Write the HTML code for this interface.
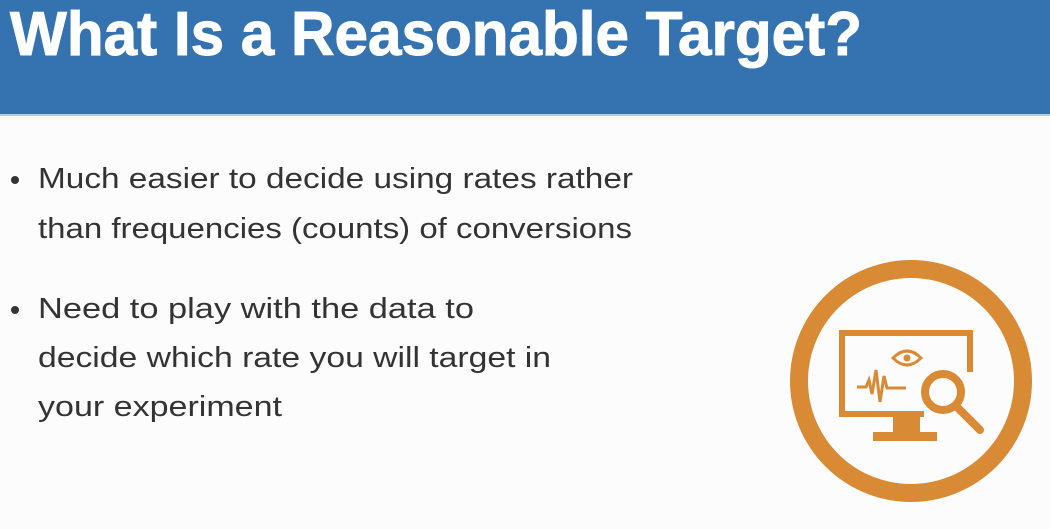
<!DOCTYPE html>
<html><head><meta charset="utf-8"><style>
html,body{margin:0;padding:0;background:#fcfcfc;width:1050px;height:529px;overflow:hidden}
</style></head><body>
<svg width="1050" height="529" viewBox="0 0 1050 529" xmlns="http://www.w3.org/2000/svg">
<rect x="0" y="0" width="1050" height="529" fill="#fcfcfc"/>
<rect x="0" y="0" width="1050" height="114" fill="#3572b0"/>
<rect x="0" y="114" width="1050" height="2" fill="#a9cde6"/>
<text x="10" y="55" font-family="Liberation Sans, sans-serif" font-weight="bold" font-size="62" fill="#ffffff" stroke="#ffffff" stroke-width="1" textLength="852" lengthAdjust="spacingAndGlyphs">What Is a Reasonable Target?</text>
<g font-family="Liberation Sans, sans-serif" font-size="29" fill="#333333">
<circle cx="15" cy="180" r="4" fill="#333"/>
<text x="38" y="188" textLength="595" lengthAdjust="spacingAndGlyphs">Much easier to decide using rates rather</text>
<text x="38" y="238" textLength="594" lengthAdjust="spacingAndGlyphs">than frequencies (counts) of conversions</text>
<circle cx="15" cy="310" r="4" fill="#333"/>
<text x="38" y="318" textLength="436" lengthAdjust="spacingAndGlyphs">Need to play with the data to</text>
<text x="38" y="367" textLength="513" lengthAdjust="spacingAndGlyphs">decide which rate you will target in</text>
<text x="38" y="416" textLength="244" lengthAdjust="spacingAndGlyphs">your experiment</text>
</g>
<g fill="none" stroke="#d98a35">
<circle cx="911" cy="381" r="112" stroke-width="18"/>
<path d="M970 372 V333 H842 V414 H924" stroke-width="6"/>
<path d="M857 387 H866 L869 380 L872 394 L876 370 L880 402 L884 376 L887 388 H906" stroke-width="3"/>
<path d="M893 358 Q907 344 921 358 Q907 372 893 358Z" stroke-width="3"/>
<circle cx="943" cy="392" r="18" stroke-width="8"/>
<path d="M957 407 L980 430" stroke-width="8" stroke-linecap="round"/>
</g>
<g fill="#d98a35">
<circle cx="907" cy="358" r="3.5"/>
<rect x="893" y="416" width="27" height="17"/>
<rect x="873" y="432" width="64" height="9"/>
</g>
</svg>
</body></html>
